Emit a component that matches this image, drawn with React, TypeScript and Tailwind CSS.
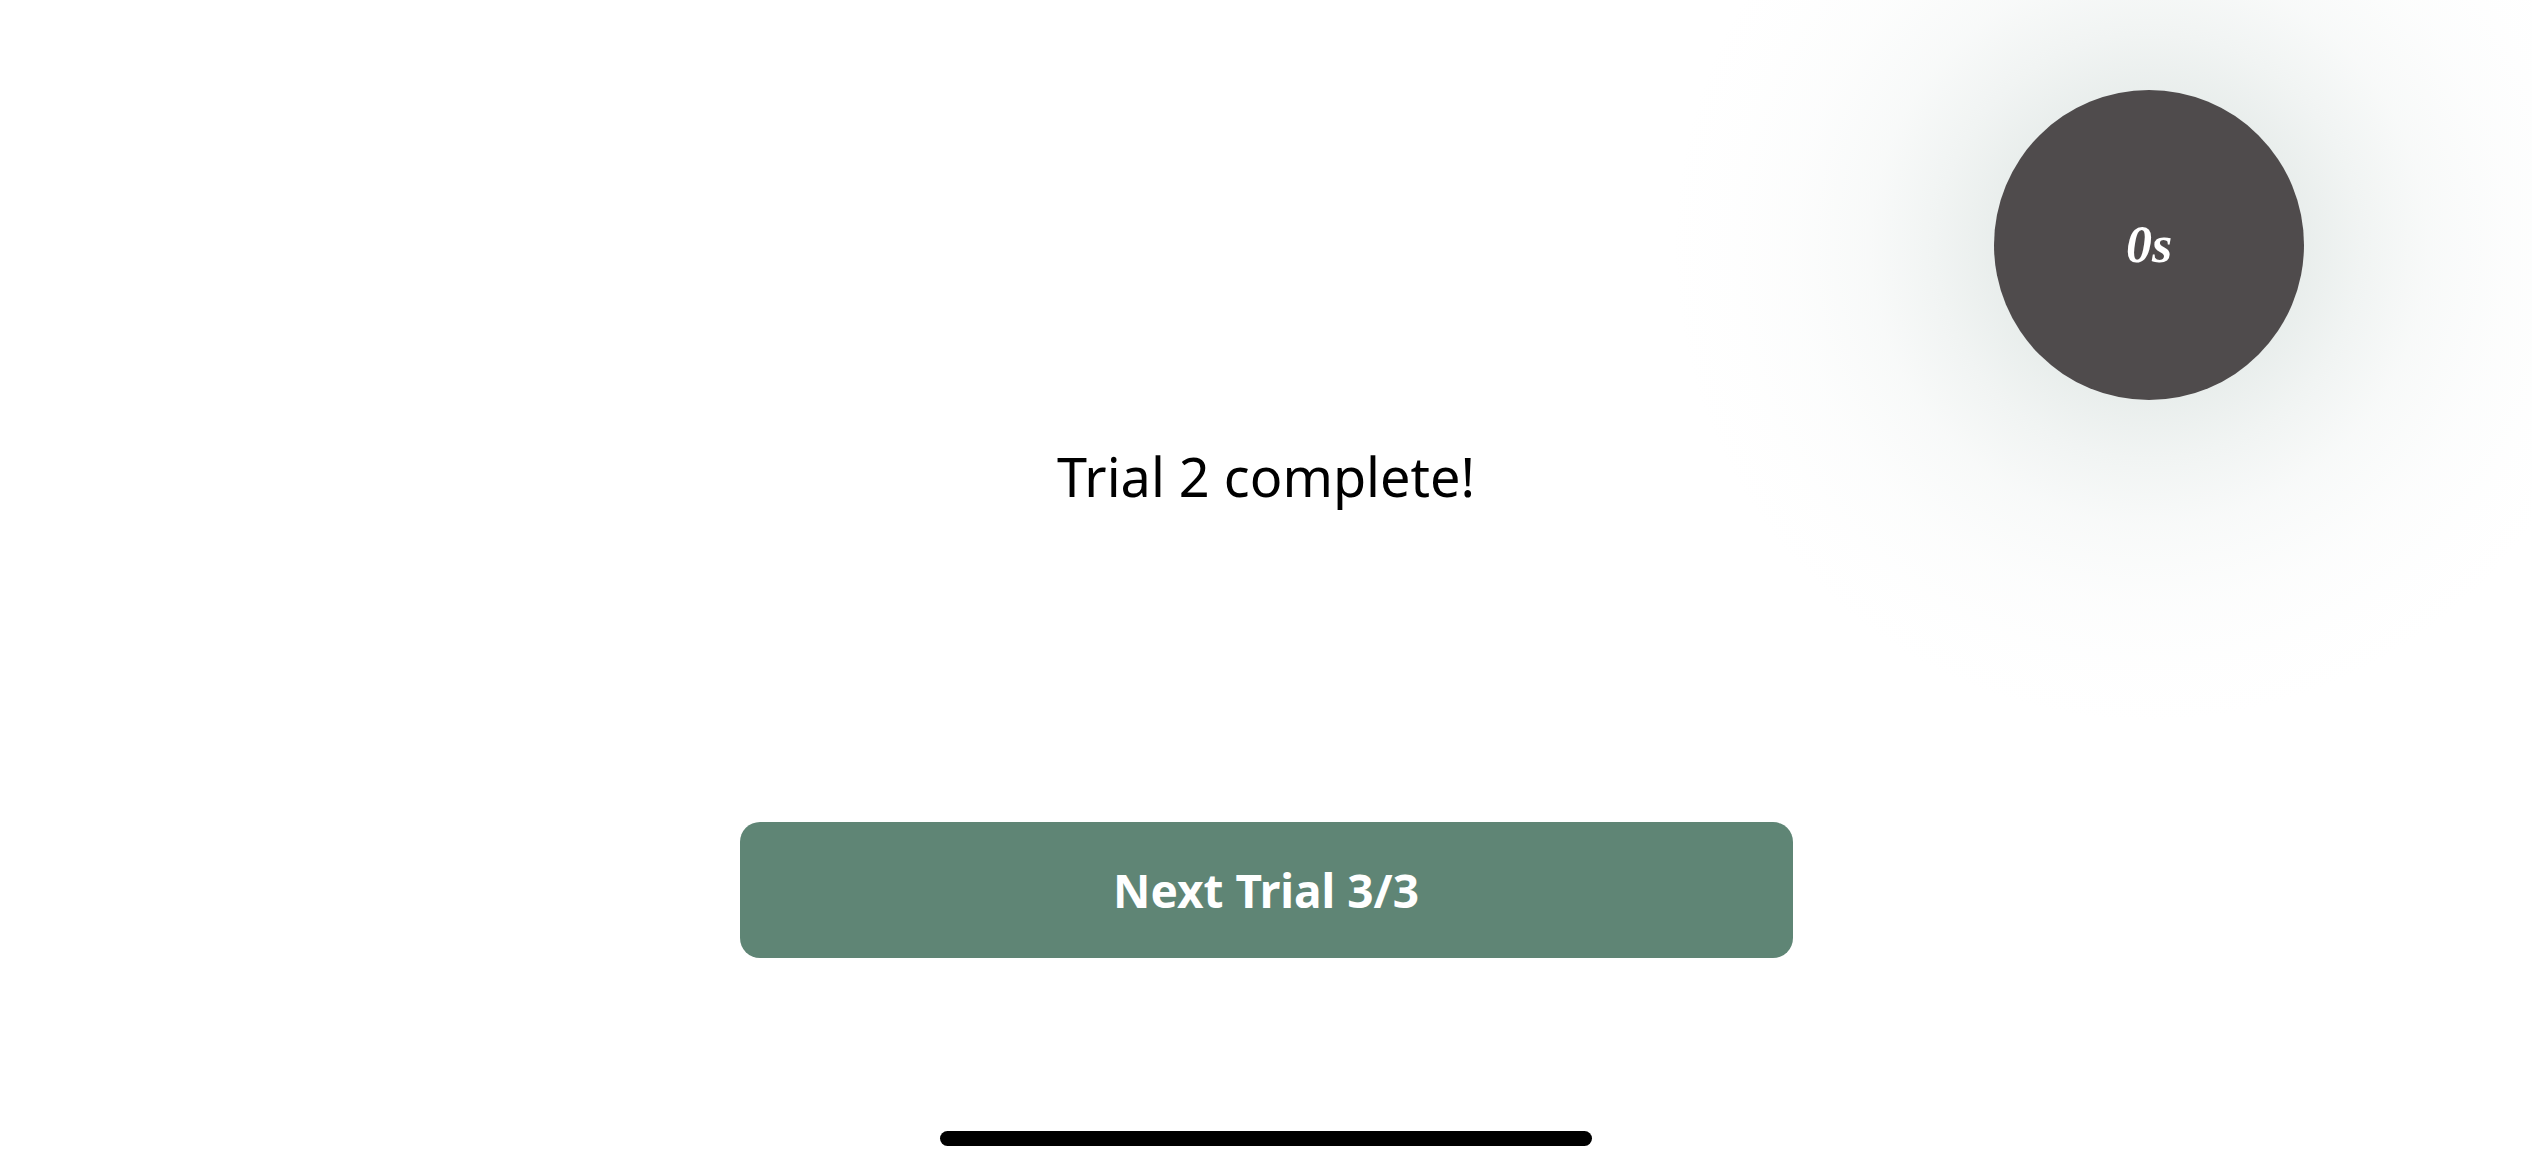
import React from "react";

export default function App() {
  return (
    <div className="relative h-[1170px] w-full overflow-hidden bg-white" style={{ fontFamily: "'Noto Sans', Inter, sans-serif" }}>
      <div className="pointer-events-none absolute left-[1669px] top-[-234px] h-[960px] w-[960px] bg-[radial-gradient(circle_closest-side_at_center,rgba(200,212,208,0.42)_0%,rgba(200,212,208,0.4)_32%,rgba(200,212,208,0.26)_44%,rgba(200,212,208,0.13)_58%,rgba(200,212,208,0.05)_74%,rgba(200,212,208,0.015)_88%,rgba(200,212,208,0)_100%)]" />
      <div className="absolute left-[1994px] top-[90px] flex h-[310px] w-[310px] items-center justify-center rounded-full bg-[#4f4b4c]">
        <span className="text-[52px] font-bold italic leading-none text-white" style={{ fontFamily: "'Liberation Serif', 'DejaVu Serif', serif" }}>0s</span>
      </div>
      <div className="flex h-full flex-col items-center">
        <div className="mt-[440px] text-[54px] leading-[72px] text-black">Trial 2 complete!</div>
        <button className="mt-[310px] flex h-[136px] w-[1053px] items-center justify-center rounded-[20px] bg-[#5f8575] text-[46px] font-bold text-white">
          Next Trial 3/3
        </button>
        <div className="mt-[173px] h-[15px] w-[652px] rounded-full bg-black" />
      </div>
    </div>
  );
}
